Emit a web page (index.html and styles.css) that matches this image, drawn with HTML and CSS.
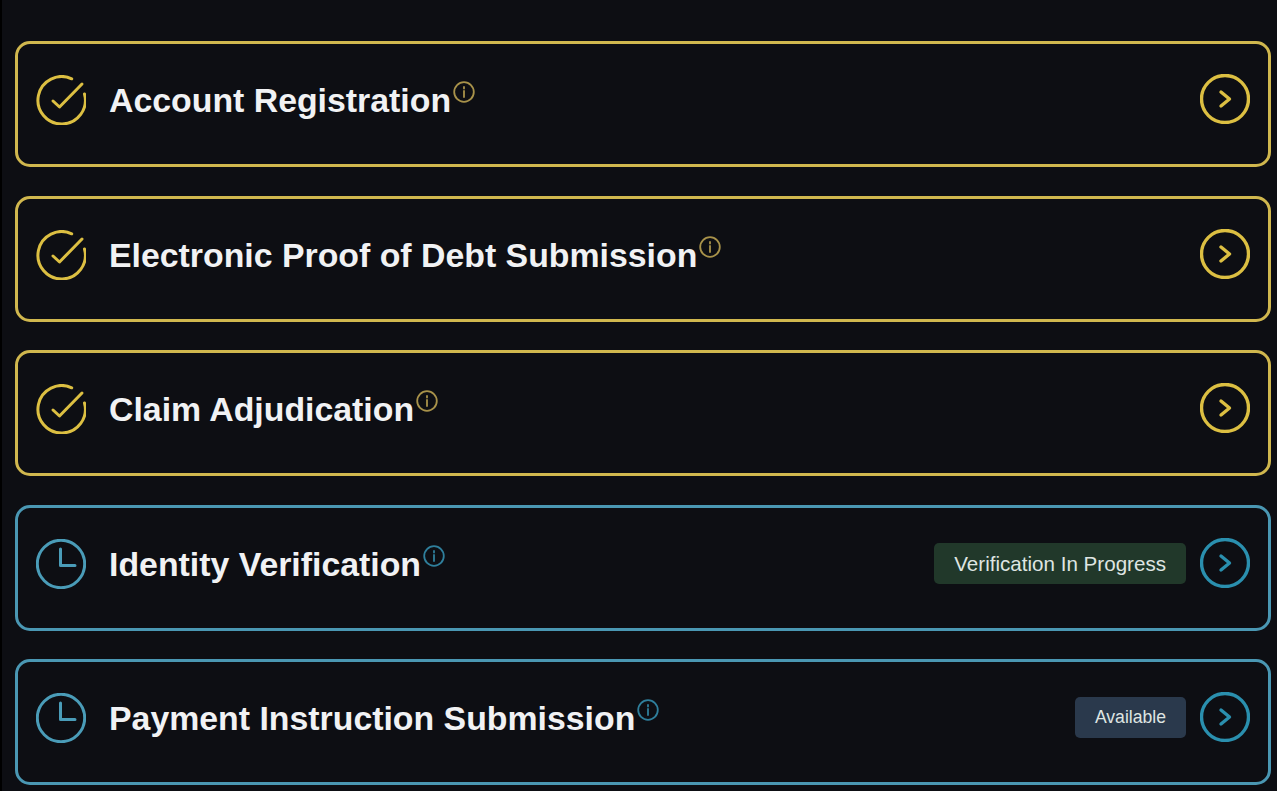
FILE: index.html
```html
<!DOCTYPE html>
<html lang="en">
<head>
  <meta charset="UTF-8">
  <meta name="viewport" content="width=device-width, initial-scale=1.0">
  <title>Claim Steps</title>
  <link rel="stylesheet" href="styles.css">
</head>
<body>
  <main class="steps">
    <!-- Completed steps -->
    <section class="step done">
      <svg class="step-icon" viewBox="0 0 50 50"><path d="M35.7 3.8A23.7 23.7 0 1 0 48.5 19"/><path d="M17 26l6.5 6L46 9"/></svg>
      <h2 class="step-title">Account Registration<svg class="info" viewBox="0 0 22 22"><circle cx="11" cy="11" r="9.8"/><path d="M11 10v6M11 6v1.5"/></svg></h2>
      <svg class="step-arrow" viewBox="0 0 50 50"><circle cx="25" cy="25" r="23.5"/><path d="M21 18l8.5 7-8.5 7"/></svg>
    </section>

    <section class="step done">
      <svg class="step-icon" viewBox="0 0 50 50"><path d="M35.7 3.8A23.7 23.7 0 1 0 48.5 19"/><path d="M17 26l6.5 6L46 9"/></svg>
      <h2 class="step-title">Electronic Proof of Debt Submission<svg class="info" viewBox="0 0 22 22"><circle cx="11" cy="11" r="9.8"/><path d="M11 10v6M11 6v1.5"/></svg></h2>
      <svg class="step-arrow" viewBox="0 0 50 50"><circle cx="25" cy="25" r="23.5"/><path d="M21 18l8.5 7-8.5 7"/></svg>
    </section>

    <section class="step done">
      <svg class="step-icon" viewBox="0 0 50 50"><path d="M35.7 3.8A23.7 23.7 0 1 0 48.5 19"/><path d="M17 26l6.5 6L46 9"/></svg>
      <h2 class="step-title">Claim Adjudication<svg class="info" viewBox="0 0 22 22"><circle cx="11" cy="11" r="9.8"/><path d="M11 10v6M11 6v1.5"/></svg></h2>
      <svg class="step-arrow" viewBox="0 0 50 50"><circle cx="25" cy="25" r="23.5"/><path d="M21 18l8.5 7-8.5 7"/></svg>
    </section>

    <!-- Pending steps -->
    <section class="step pending">
      <svg class="step-icon" viewBox="0 0 50 50"><circle cx="25" cy="25" r="23.7"/><path d="M24.5 10v16.5H39"/></svg>
      <h2 class="step-title">Identity Verification<svg class="info" viewBox="0 0 22 22"><circle cx="11" cy="11" r="9.8"/><path d="M11 10v6M11 6v1.5"/></svg></h2>
      <span class="badge badge-progress">Verification In Progress</span>
      <svg class="step-arrow" viewBox="0 0 50 50"><circle cx="25" cy="25" r="23.5"/><path d="M21 18l8.5 7-8.5 7"/></svg>
    </section>

    <section class="step pending">
      <svg class="step-icon" viewBox="0 0 50 50"><circle cx="25" cy="25" r="23.7"/><path d="M24.5 10v16.5H39"/></svg>
      <h2 class="step-title">Payment Instruction Submission<svg class="info" viewBox="0 0 22 22"><circle cx="11" cy="11" r="9.8"/><path d="M11 10v6M11 6v1.5"/></svg></h2>
      <span class="badge badge-available">Available</span>
      <svg class="step-arrow" viewBox="0 0 50 50"><circle cx="25" cy="25" r="23.5"/><path d="M21 18l8.5 7-8.5 7"/></svg>
    </section>
  </main>
</body>
</html>
```

FILE: styles.css
```css
/* styles.css */

html, body {
  margin: 0;
  height: 100%;
  overflow: hidden;
  background-color: #fff;
}

body {
  font-family: 'Liberation Sans', sans-serif;
}

.steps {
  display: flex;
  flex-direction: column;
  gap: 28.5px;
  box-sizing: border-box;
  width: 1277px;
  height: 791px;
  padding: 41px 6px 0 13px;
  border-left: 2px solid #000;
  background-color: #0d0e13;
}

.step {
  display: flex;
  align-items: flex-start;
  flex: none;
  box-sizing: border-box;
  height: 126px;
  padding: 30px 18px 0;
  border: 3px solid;
  border-radius: 15px;
}

.step svg {
  fill: none;
  stroke-linecap: round;
  stroke-linejoin: round;
}

.done {
  border-color: #d0b74e;
}

.pending {
  border-color: #4a97b3;
}

.step-icon {
  flex: none;
  width: 50px;
  height: 50px;
  margin-top: 1px;
  margin-right: 23px;
  stroke-width: 3;
}

.done .step-icon,
.done .step-arrow {
  stroke: #dcbf42;
}

.pending .step-icon {
  stroke: #4a9cb8;
}

.pending .step-arrow {
  stroke: #2a8fae;
}

.step-title {
  flex: 1;
  margin: 0;
  padding-top: 4px;
  color: #f1f2f4;
  font-size: 33.85px;
  font-weight: 700;
  line-height: 44px;
  white-space: nowrap;
}

.info {
  width: 22px;
  height: 22px;
  margin-left: 2px;
  vertical-align: 9px;
  stroke-width: 1.8;
}

.done .info {
  stroke: #a8924a;
}

.pending .info {
  stroke: #2f7f9c;
}

.step-arrow {
  flex: none;
  width: 50px;
  height: 50px;
  stroke-width: 3.4;
}

.badge {
  flex: none;
  margin: 5px 14px 0 0;
  padding: 0 20px;
  border-radius: 5px;
  color: #dfe5e2;
  line-height: 41px;
}

.badge-progress {
  background-color: #21382a;
  font-size: 20.6px;
}

.badge-available {
  background-color: #2a394c;
  font-size: 17.6px;
}
```
